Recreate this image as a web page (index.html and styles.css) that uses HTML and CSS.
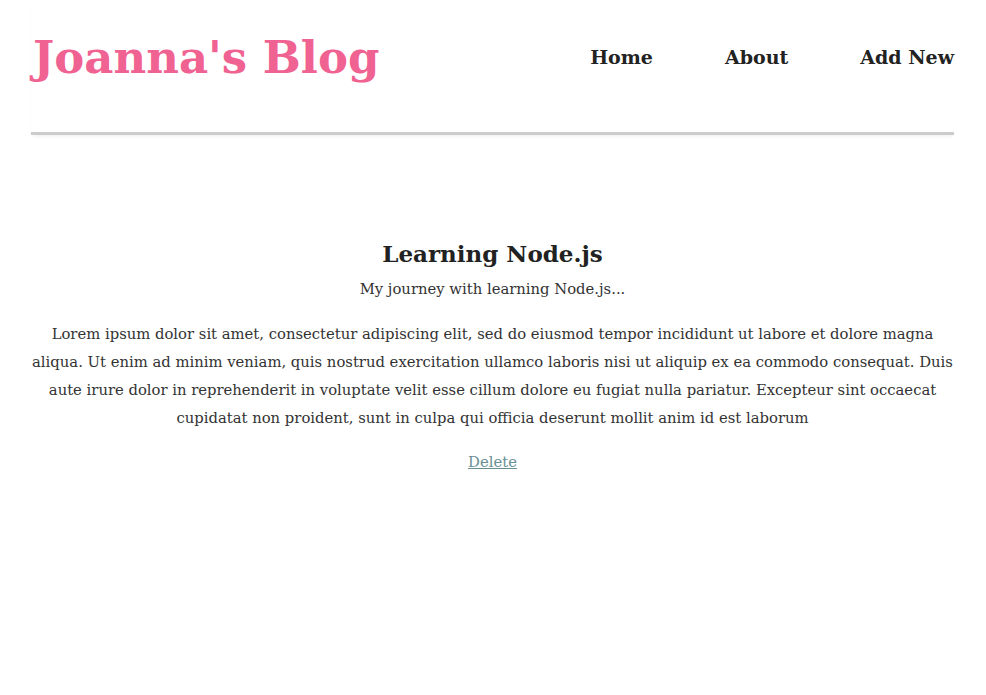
FILE: index.html
```html
<!DOCTYPE html>
<html>
<head>
<meta charset="utf-8">
<link rel="stylesheet" href="styles.css">
</head>
<body>
<div class="page">
  <header class="site-header">
    <h1 class="logo">Joanna's Blog</h1>
    <nav class="nav">
      <a href="#">Home</a>
      <a href="#">About</a>
      <a href="#">Add New</a>
    </nav>
  </header>
  <main class="post">
    <h2 class="post-title">Learning Node.js</h2>
    <p class="post-snippet">My journey with learning Node.js...</p>
    <p class="post-body">Lorem ipsum dolor sit amet, consectetur adipiscing elit, sed do eiusmod tempor incididunt ut labore et dolore magna aliqua. Ut enim ad minim veniam, quis nostrud exercitation ullamco laboris nisi ut aliquip ex ea commodo consequat. Duis aute irure dolor in reprehenderit in voluptate velit esse cillum dolore eu fugiat nulla pariatur. Excepteur sint occaecat cupidatat non proident, sunt in culpa qui officia deserunt mollit anim id est laborum</p>
    <a class="delete" href="#">Delete</a>
  </main>
</div>
</body>
</html>
```
FILE: styles.css
```css
html, body {
  margin: 0;
  padding: 0;
  background: #fff;
}
body {
  font-family: "DejaVu Serif", serif;
  color: #333;
}
.page {
  padding: 0 32px 0 31px;
}
.site-header {
  display: flex;
  justify-content: space-between;
  align-items: center;
  height: 132px;
  border-bottom: 3px solid #ccc;
  box-shadow: 0 3px 4px -2px rgba(0,0,0,0.08);
}
.logo {
  margin: 0 0 18px 2px;
  font-size: 45px;
  font-weight: bold;
  color: #f06292;
}
.nav {
  display: flex;
  gap: 72px;
  margin-bottom: 18px;
}
.nav a {
  font-size: 19px;
  font-weight: bold;
  color: #222;
  text-decoration: none;
}
.post {
  display: flex;
  flex-direction: column;
  align-items: center;
  text-align: center;
  padding-top: 105px;
}
.post-title {
  margin: 0;
  font-size: 23px;
  font-weight: bold;
  color: #222;
}
.post-snippet {
  margin: 13px 0 0;
  font-size: 14.8px;
  color: #333;
}
.post-body {
  margin: 23px 0 0;
  font-size: 14.8px;
  line-height: 28px;
  color: #333;
}
.delete {
  margin-top: 21px;
  font-size: 14.8px;
  color: #6a8f94;
}
```
